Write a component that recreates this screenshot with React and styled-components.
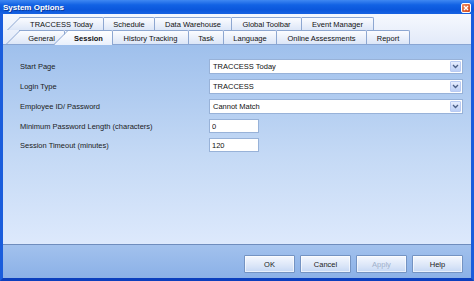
import React from "react"
import styled, { createGlobalStyle, css } from "styled-components"

const GlobalStyle = createGlobalStyle`
  html, body {
    margin: 0;
    padding: 0;
    width: 474px;
    height: 281px;
    overflow: hidden;
    background: #fff;
  }
  * {
    box-sizing: border-box;
  }
`

const Window = styled.div`
  width: 474px;
  height: 281px;
  display: flex;
  flex-direction: column;
  font-family: "Liberation Sans", Arial, sans-serif;
  font-size: 7.5px;
  color: #111;
  background: #1559dc;
`

const TitleBar = styled.div`
  height: 14px;
  flex: none;
  display: flex;
  align-items: center;
  justify-content: space-between;
  padding: 0 3px 0 3px;
  background: linear-gradient(#3f88f2 0%, #1262e4 35%, #0b57dc 70%, #1863e2 100%);
  color: #fff;
  font-weight: 700;
  font-size: 8px;
  text-shadow: 1px 1px 0 #0a3a9c;
`

const CloseBtn = styled.div`
  width: 10px;
  height: 10px;
  margin-top: 1px;
  border: 1px solid #fff;
  border-radius: 2px;
  background: linear-gradient(135deg, #f08a5d, #d1461b);
  display: flex;
  align-items: center;
  justify-content: center;
`

const Frame = styled.div`
  flex: 1;
  display: flex;
  flex-direction: column;
  border-left: 3px solid #1a5ddc;
  border-right: 3px solid #1a5ddc;
  border-bottom: 3px solid #0c3fbd;
  min-height: 0;
`

const TabHeader = styled.div`
  height: 30px;
  flex: none;
  padding-top: 3px;
  display: flex;
  flex-direction: column;
  background: linear-gradient(#f6f9fe, #e2eaf9);
`

const TabRow = styled.div`
  display: flex;
  height: ${p => p.$h}px;
  padding-left: ${p => p.$pad}px;
`

const tabBorder = "#8da7d1"

const Tab = styled.div`
  position: relative;
  width: ${p => p.$w}px;
  height: ${p => (p.$active ? "calc(100% + 1px)" : "100%")};
  flex: none;
  display: flex;
  align-items: center;
  justify-content: center;
  padding-top: 1px;
  font-weight: ${p => (p.$active ? 700 : 400)};
  white-space: nowrap;
  background: ${p =>
    p.$active
      ? "linear-gradient(#ffffff, #e9f0fc)"
      : "linear-gradient(#fbfcff, #dce6f7)"};
  border-top: 1px solid ${tabBorder};
  border-right: 1px solid ${tabBorder};
  border-top-right-radius: 2px;
  z-index: ${p => (p.$active ? 3 : 1)};

  ${p =>
    p.$slant &&
    css`
      &::before {
        content: "";
        position: absolute;
        top: -1px;
        bottom: 0;
        left: -${p.$slant}px;
        width: ${p.$slant + 3}px;
        background: inherit;
        border-left: 1px solid ${tabBorder};
        border-top: 1px solid ${tabBorder};
        transform: skewX(-45deg);
        transform-origin: bottom left;
        z-index: -1;
      }
    `}
`

const Panel = styled.div`
  flex: 1;
  min-height: 0;
  border-top: 1px solid #8aa6d3;
  border-bottom: 1px solid #6f8dbd;
  background: linear-gradient(#9fc0ec, #c4d9f5 55%, #dde9fc);
  padding: 14px 0 0 17px;
  display: flex;
  flex-direction: column;
  gap: 5px;
`

const FormRow = styled.div`
  display: flex;
  align-items: center;
  height: ${p => p.$h || 15}px;
`

const Label = styled.div`
  width: 189px;
  flex: none;
  color: #1b1b1b;
`

const Select = styled.div`
  width: 254px;
  height: 15px;
  border: 1px solid #98b2d8;
  background: #fff;
  display: flex;
  align-items: center;
  padding-left: 3px;
`

const DropBtn = styled.span`
  margin-left: auto;
  margin-right: 1px;
  width: 11px;
  height: 11px;
  border: 1px solid #b8caf2;
  border-radius: 1px;
  background: linear-gradient(#e6edfd, #bccff6);
  display: flex;
  align-items: center;
  justify-content: center;
`

const TextBox = styled.input`
  width: 50px;
  height: 14px;
  border: 1px solid #98b2d8;
  background: #fff;
  padding: 0 0 0 2px;
  font-family: inherit;
  font-size: 7.5px;
  color: #111;
  outline: none;
`

const ButtonBar = styled.div`
  height: 33px;
  flex: none;
  display: flex;
  justify-content: flex-end;
  gap: 5px;
  padding: 10px 8px 0 0;
  background: linear-gradient(#a2c1ed, #8bb1e7);
`

const Button = styled.div`
  width: 51px;
  height: 18px;
  display: flex;
  align-items: center;
  justify-content: center;
  border: 1px solid #7493c2;
  border-radius: 1px;
  background: linear-gradient(#f5f8fe, #dbe6f8 60%, #c6d8f4);
  box-shadow: inset 0 0 0 1px rgba(255, 255, 255, 0.6);
  color: ${p => (p.$disabled ? "#9fb1cb" : "#1b1b1b")};
`

const Chevron = () => (
  <svg width="7" height="5" viewBox="0 0 7 5">
    <path d="M1 1 L3.5 3.5 L6 1" fill="none" stroke="#4b5f86" strokeWidth="1.3" />
  </svg>
)

const rowOne = [
  { label: "TRACCESS Today", w: 84, slant: 13 },
  { label: "Schedule", w: 51 },
  { label: "Data Warehouse", w: 77 },
  { label: "Global Toolbar", w: 70 },
  { label: "Event Manager", w: 72 },
]

const rowTwo = [
  { label: "General", w: 46, slant: 13 },
  { label: "Session", w: 48, slant: 12, active: true },
  { label: "History Tracking", w: 76 },
  { label: "Task", w: 35 },
  { label: "Language", w: 53 },
  { label: "Online Assessments", w: 90 },
  { label: "Report", w: 43 },
]

export default function App() {
  return (
    <>
      <GlobalStyle />
      <Window>
        <TitleBar>
          <span>System Options</span>
          <CloseBtn>
            <svg width="6" height="6" viewBox="0 0 6 6">
              <path d="M1 1 L5 5 M5 1 L1 5" stroke="#fff" strokeWidth="1.4" />
            </svg>
          </CloseBtn>
        </TitleBar>
        <Frame>
          <TabHeader>
            <TabRow $h={13} $pad={17}>
              {rowOne.map(t => (
                <Tab key={t.label} $w={t.w} $slant={t.slant}>
                  {t.label}
                </Tab>
              ))}
            </TabRow>
            <TabRow $h={14} $pad={16}>
              {rowTwo.map(t => (
                <Tab key={t.label} $w={t.w} $slant={t.slant} $active={t.active}>
                  {t.label}
                </Tab>
              ))}
            </TabRow>
          </TabHeader>
          <Panel>
            <FormRow>
              <Label>Start Page</Label>
              <Select>
                TRACCESS Today
                <DropBtn>
                  <Chevron />
                </DropBtn>
              </Select>
            </FormRow>
            <FormRow>
              <Label>Login Type</Label>
              <Select>
                TRACCESS
                <DropBtn>
                  <Chevron />
                </DropBtn>
              </Select>
            </FormRow>
            <FormRow>
              <Label>Employee ID/ Password</Label>
              <Select>
                Cannot Match
                <DropBtn>
                  <Chevron />
                </DropBtn>
              </Select>
            </FormRow>
            <FormRow $h={14}>
              <Label>Minimum Password Length (characters)</Label>
              <TextBox readOnly value="0" />
            </FormRow>
            <FormRow $h={14}>
              <Label>Session Timeout (minutes)</Label>
              <TextBox readOnly value="120" />
            </FormRow>
          </Panel>
          <ButtonBar>
            <Button>OK</Button>
            <Button>Cancel</Button>
            <Button $disabled>Apply</Button>
            <Button>Help</Button>
          </ButtonBar>
        </Frame>
      </Window>
    </>
  )
}
